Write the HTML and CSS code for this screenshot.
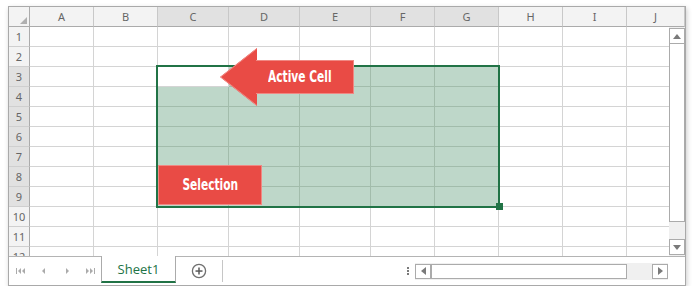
FILE: index.html
```html
<!DOCTYPE html>
<html lang="en">
<head>
    <meta charset="UTF-8">
    <title>Spreadsheet selection</title>
    <link rel="stylesheet" href="styles.css">
</head>
<body>
    <div class="book">
        <div class="sheet">
            <div class="row head">
                <div class="corner"><span class="corner-mark"></span></div>
                <div class="ch">A</div><div class="ch">B</div>
                <div class="ch hs">C</div><div class="ch hs">D</div><div class="ch hs">E</div><div class="ch hs">F</div><div class="ch hs">G</div>
                <div class="ch">H</div><div class="ch">I</div><div class="ch">J</div>
            </div>
            <div class="row"><div class="rh">1</div><div></div><div></div><div></div><div></div><div></div><div></div><div></div><div></div><div></div><div></div></div>
            <div class="row"><div class="rh">2</div><div></div><div></div><div></div><div></div><div></div><div></div><div></div><div></div><div></div><div></div></div>
            <div class="row"><div class="rh hs">3</div><div></div><div></div><div></div><div class="s"></div><div class="s"></div><div class="s"></div><div class="s"></div><div></div><div></div><div></div></div>
            <div class="row"><div class="rh hs">4</div><div></div><div></div><div class="s"></div><div class="s"></div><div class="s"></div><div class="s"></div><div class="s"></div><div></div><div></div><div></div></div>
            <div class="row"><div class="rh hs">5</div><div></div><div></div><div class="s"></div><div class="s"></div><div class="s"></div><div class="s"></div><div class="s"></div><div></div><div></div><div></div></div>
            <div class="row"><div class="rh hs">6</div><div></div><div></div><div class="s"></div><div class="s"></div><div class="s"></div><div class="s"></div><div class="s"></div><div></div><div></div><div></div></div>
            <div class="row"><div class="rh hs">7</div><div></div><div></div><div class="s"></div><div class="s"></div><div class="s"></div><div class="s"></div><div class="s"></div><div></div><div></div><div></div></div>
            <div class="row"><div class="rh hs">8</div><div></div><div></div><div class="s"></div><div class="s"></div><div class="s"></div><div class="s"></div><div class="s"></div><div></div><div></div><div></div></div>
            <div class="row"><div class="rh hs">9</div><div></div><div></div><div class="s"></div><div class="s"></div><div class="s"></div><div class="s"></div><div class="s"></div><div></div><div></div><div></div></div>
            <div class="row"><div class="rh">10</div><div></div><div></div><div></div><div></div><div></div><div></div><div></div><div></div><div></div><div></div></div>
            <div class="row"><div class="rh">11</div><div></div><div></div><div></div><div></div><div></div><div></div><div></div><div></div><div></div><div></div></div>
            <div class="row"><div class="rh">12</div><div></div><div></div><div></div><div></div><div></div><div></div><div></div><div></div><div></div><div></div></div>

            <div class="selection"></div>
            <div class="fill-handle"></div>

            <div class="callout-arrow">
                <svg class="arrow-head" width="37" height="58" viewBox="0 0 37 58">
                    <polygon points="37,0 0,29 37,58" fill="#e94b45"/>
                    <polyline points="37,0.5 0.8,29 37,57.5" fill="none" stroke="#f08883" stroke-width="1"/>
                </svg>
                <div class="arrow-body"><span class="callout-text">Active Cell</span></div>
            </div>
            <div class="callout-box"><span class="callout-text">Selection</span></div>

            <div class="vscroll">
                <div class="sb-btn">
                    <svg width="8" height="5" viewBox="0 0 8 5"><polygon points="4,0 8,5 0,5" fill="#7a7a7a"/></svg>
                </div>
                <div class="v-thumb"></div>
                <div class="sb-track"></div>
                <div class="sb-btn">
                    <svg width="8" height="5" viewBox="0 0 8 5"><polygon points="0,0 8,0 4,5" fill="#7a7a7a"/></svg>
                </div>
            </div>
        </div>

        <div class="tabs">
            <div class="nav">
                <div class="nav-btn">
                    <svg width="10" height="6" viewBox="0 0 10 6"><rect x="0" y="0" width="1" height="6" fill="#ababab"/><polygon points="5,0 5,6 2,3" fill="#ababab"/><polygon points="9,0 9,6 6,3" fill="#ababab"/></svg>
                </div>
                <div class="nav-btn">
                    <svg width="4" height="6" viewBox="0 0 4 6"><polygon points="3,0 3,6 0,3" fill="#ababab"/></svg>
                </div>
                <div class="nav-btn">
                    <svg width="4" height="6" viewBox="0 0 4 6"><polygon points="1,0 1,6 4,3" fill="#ababab"/></svg>
                </div>
                <div class="nav-btn">
                    <svg width="10" height="6" viewBox="0 0 10 6"><polygon points="1,0 1,6 4,3" fill="#ababab"/><polygon points="5,0 5,6 8,3" fill="#ababab"/><rect x="9" y="0" width="1" height="6" fill="#ababab"/></svg>
                </div>
            </div>
            <div class="tab">Sheet1</div>
            <div class="add">
                <svg width="16" height="16" viewBox="0 0 16 16">
                    <circle cx="8" cy="8" r="6.6" fill="none" stroke="#6f6f6f" stroke-width="1.3"/>
                    <rect x="4.5" y="7.3" width="7" height="1.5" fill="#5a5a5a"/>
                    <rect x="7.25" y="4.5" width="1.5" height="7" fill="#5a5a5a"/>
                </svg>
            </div>
            <div class="tab-sep"></div>
            <div class="tab-space"></div>
            <div class="grip"><span></span><span></span><span></span></div>
            <div class="hscroll">
                <div class="sb-btn h">
                    <svg width="5" height="8" viewBox="0 0 5 8"><polygon points="5,0 5,8 0,4" fill="#7a7a7a"/></svg>
                </div>
                <div class="h-thumb"></div>
                <div class="sb-track"></div>
                <div class="sb-btn h">
                    <svg width="5" height="8" viewBox="0 0 5 8"><polygon points="0,0 0,8 5,4" fill="#7a7a7a"/></svg>
                </div>
            </div>
        </div>
    </div>
</body>
</html>
```

FILE: styles.css
```css
* {
    margin: 0;
    padding: 0;
    box-sizing: border-box;
}

body {
    background: #fff;
    font-family: "Noto Sans", "Open Sans", sans-serif;
}

.book {
    margin: 6px 0 0 8px;
    width: 678px;
    height: 280px;
    border: 1px solid #a9a9a9;
    box-shadow: 1px 2px 5px rgba(0, 0, 0, 0.2);
    display: flex;
    flex-direction: column;
    background: #fff;
}

/* grid */

.sheet {
    position: relative;
    height: 249px;
    overflow: hidden;
}

.row {
    display: grid;
    grid-template-columns: 21px 64px 64px 71px 71px 71px 64px 64px 64px 64px 58px;
    height: 20px;
}

.row > div {
    border-right: 1px solid #d4d4d4;
    border-bottom: 1px solid #d4d4d4;
}

.row > .s {
    background: #bed7c9;
    border-color: #a2bcab;
}

.head > div {
    background: #f3f3f3;
    color: #666;
    font-size: 11px;
    display: flex;
    align-items: center;
    justify-content: center;
    border-right-color: #c8c8c8;
    border-bottom-color: #ababab;
}

.head > .corner {
    position: relative;
    border-right-color: #ababab;
}

.corner-mark {
    position: absolute;
    right: 2px;
    bottom: 2px;
    width: 0;
    height: 0;
    border-left: 7px solid transparent;
    border-bottom: 7px solid #b0b0b0;
}

.row > .rh {
    background: #f3f3f3;
    color: #666;
    font-size: 11px;
    display: flex;
    align-items: center;
    justify-content: center;
    border-right-color: #ababab;
    border-bottom-color: #cfcfcf;
}

.row > .hs {
    background: #e1e1e1;
}

/* selection */

.selection {
    position: absolute;
    left: 147px;
    top: 58px;
    width: 344px;
    height: 143px;
    border: 2px solid #217346;
}

.fill-handle {
    position: absolute;
    left: 487px;
    top: 196px;
    width: 7px;
    height: 7px;
    background: #217346;
}

/* callouts */

.callout-arrow {
    position: absolute;
    left: 211px;
    top: 41px;
    display: flex;
    align-items: center;
}

.arrow-head {
    display: block;
    margin-right: -1px;
}

.arrow-body {
    width: 98px;
    height: 34px;
    background: #e94b45;
    border: 1px solid #f08883;
    border-left: none;
    display: flex;
    align-items: center;
    padding-left: 12px;
}

.callout-box {
    position: absolute;
    left: 149px;
    top: 158px;
    width: 104px;
    height: 40px;
    background: #e94b45;
    border: 1px solid #f08883;
    display: flex;
    align-items: center;
    justify-content: center;
}

.callout-text {
    display: inline-block;
    color: #fff;
    font-family: "DejaVu Sans Condensed", "DejaVu Sans", sans-serif;
    font-weight: bold;
    font-size: 15px;
    white-space: nowrap;
    transform: scaleX(0.79);
}

.arrow-body .callout-text {
    transform-origin: left center;
}

/* scrollbars */

.vscroll {
    position: absolute;
    left: 660px;
    top: 20px;
    bottom: 0;
    width: 16px;
    padding: 1px 0;
    background: #f0f0f0;
    display: flex;
    flex-direction: column;
}

.sb-btn {
    width: 16px;
    height: 16px;
    background: #fff;
    border: 1px solid #ababab;
    display: flex;
    align-items: center;
    justify-content: center;
}

.sb-btn svg {
    display: block;
}

.v-thumb {
    height: 178px;
    background: #fff;
    border: 1px solid #ababab;
    border-top: none;
}

.sb-track {
    flex: 1;
}

.hscroll {
    width: 253px;
    height: 17px;
    padding: 1px 0;
    margin-right: 17px;
    background: #f0f0f0;
    display: flex;
}

.sb-btn.h {
    height: 15px;
}

.h-thumb {
    width: 196px;
    background: #fff;
    border: 1px solid #ababab;
}

/* sheet tabs */

.tabs {
    height: 29px;
    border-top: 1px solid #b4b4b4;
    display: flex;
    align-items: center;
}

.nav {
    width: 92px;
    display: flex;
}

.nav-btn {
    width: 23px;
    display: flex;
    justify-content: center;
}

.nav-btn svg {
    display: block;
}

.tab {
    align-self: stretch;
    width: 75px;
    margin: -1px 0 2px;
    background: #fff;
    border: 1px solid #ababab;
    border-top: none;
    border-bottom: 2px solid #217346;
    color: #217346;
    font-family: "Open Sans", sans-serif;
    font-size: 13px;
    display: flex;
    align-items: center;
    justify-content: center;
    padding-top: 1px;
}

.add {
    width: 46px;
    display: flex;
    justify-content: center;
}

.add svg {
    display: block;
}

.tab-sep {
    width: 1px;
    height: 22px;
    background: #c6c6c6;
}

.tab-space {
    flex: 1;
}

.grip {
    width: 3px;
    margin-right: 5px;
    display: flex;
    flex-direction: column;
    gap: 1px;
}

.grip span {
    width: 2px;
    height: 2px;
    background: #7a7a7a;
}
```
